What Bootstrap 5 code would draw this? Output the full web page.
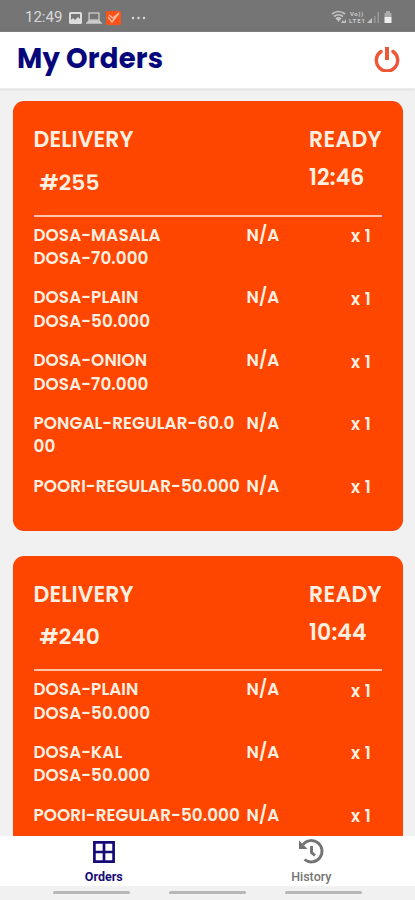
<!DOCTYPE html>
<html lang="en">
<head>
<meta charset="utf-8">
<meta name="viewport" content="width=device-width, initial-scale=1">
<title>My Orders</title>
<link href="https://cdn.jsdelivr.net/npm/bootstrap@5.3.0/dist/css/bootstrap.min.css" rel="stylesheet">
<style>
body{font-family:Poppins,Inter,sans-serif;background:#f1f1f1;height:900px}
svg{display:block;flex:none}
.status-bar{height:32px;background:#757575;color:#d8d8d8;font:15px/1 Roboto,sans-serif;padding:3px 22px 0 25px}
.clock{width:44px}
.app-header{height:57px;padding:0 15px 3px 17px;border-bottom:1px solid #eee;box-shadow:0 1px 2px #ddd;z-index:1}
.app-header h1{font-size:27.500px;font-weight:700;color:#07077c;letter-spacing:.2px;line-height:1}
.orders{padding:12px 12px 0 13px;min-height:0}
.order{background:#ff4600;color:#fff0e2;border-radius:11px;padding:25px 21px 0 20.5px;height:430px;margin-bottom:24.7px;flex:none}
.order-head{height:90.500px;border-bottom:2px solid #ffc4a7;font-size:22px;font-weight:600;line-height:28px}
.kind{letter-spacing:.12px}
.number{padding:14.500px 0 0 6px;font-size:21.8px}
.ready{width:73px}
.ready-label{letter-spacing:.3px;white-space:nowrap}
.time{padding-top:10px;letter-spacing:.1px}
.item{font-size:16.800px;font-weight:600;line-height:23.4px;margin-bottom:16px;letter-spacing:.08px;white-space:nowrap}
.items{padding-top:7px}
.item-name{width:213px}
.item-note{width:104.500px}
.item-qty{padding-top:1.400px;letter-spacing:.4px}
.tabs{height:50px;font:bold 12.5px/14px Roboto,sans-serif;z-index:1}
.tab-link{width:50%;padding-top:2px;color:#747474}
.tab-link.current{color:#160b79}
.system-nav{height:14px;gap:39px;padding-top:5px;background:#f1f1f1;z-index:1}
.system-nav i{width:77px;height:3px;background:#b7b7b7;border-radius:2px}
</style>
</head>
<body class="d-flex flex-column overflow-hidden">
<div class="status-bar d-flex align-items-center flex-shrink-0">
  <span class="clock">12:49</span>
  <svg width="13" height="12" viewBox="0 0 13 12"><rect width="13" height="12" rx="1.5" fill="#ddd"/><path d="M2 2h9v5L9 5 6 8 4 6 2 8z" fill="#757575"/></svg>
  <svg class="ms-1" width="16" height="12" viewBox="0 0 16 12" fill="none" stroke="#ccc" stroke-width="1.3"><rect x="3" y="1" width="10" height="7"/><path d="M1 11h14l-2-2H3z" fill="#ccc"/></svg>
  <svg class="ms-1" width="15" height="14" viewBox="0 0 15 14"><rect width="15" height="14" rx="1" fill="#f9531c"/><path d="M2 6l4 5 7-9M3 4l4 3 6-5" fill="none" stroke="#ffb59a" stroke-width="1.5"/></svg>
  <svg class="ms-2" width="17" height="4" fill="#ddd"><circle cx="4" cy="2" r="1.2"/><circle cx="9.500" cy="2" r="1.2"/><circle cx="15" cy="2" r="1.2"/></svg>
  <svg class="ms-auto" width="62" height="16" viewBox="0 0 62 16"><g fill="none" stroke="#c4c4c4" stroke-width="1.7"><path d="M1 4q6.500-5 13 0M3 6.500q4.500-3.500 9 0M5 9q2.500-2 5 0"/></g><path d="M7.500 12l-2-3h4zM10 13l2-3 1 2 2-3v4zM36 13h5V8z" fill="#c4c4c4"/><g fill="#ccc" font-family="Roboto" font-size="6" font-weight="700"><text x="19" y="6" textLength="13">Vo))</text><text x="18" y="13" textLength="16">LTE1</text></g><path d="M43 6h1.500v7H43zM46.500 2H48v11h-1.500z" fill="#999"/><path d="M55 1h4v2h1.500v4h-7V3H55z" fill="#aaa"/><path d="M53.500 7h7v6h-7z" fill="#eee"/></svg>
</div>
<header class="app-header bg-white d-flex align-items-center justify-content-between flex-shrink-0 position-relative">
  <h1 class="mb-0">My Orders</h1>
  <svg width="26" height="27" viewBox="0 0 26 27" fill="none" stroke="#ed5636" stroke-width="3.400" stroke-linecap="round"><path d="M7 6.500a10.700 10.700 0 1 0 12 0"/><path d="M13 2v13" stroke-width="4" stroke-linecap="butt"/></svg>
</header>
<main class="orders flex-grow-1 overflow-hidden d-flex flex-column">
  <section class="order">
    <div class="order-head d-flex justify-content-between">
      <div><div class="kind">DELIVERY</div><div class="number">#255</div></div>
      <div class="ready"><div class="ready-label">READY</div><div class="time">12:46</div></div>
    </div>
    <div class="items">
      <div class="item d-flex"><div class="item-name">DOSA-MASALA<br>DOSA-70.000</div><div class="item-note">N/A</div><div class="item-qty">x 1</div></div>
      <div class="item d-flex"><div class="item-name">DOSA-PLAIN<br>DOSA-50.000</div><div class="item-note">N/A</div><div class="item-qty">x 1</div></div>
      <div class="item d-flex"><div class="item-name">DOSA-ONION<br>DOSA-70.000</div><div class="item-note">N/A</div><div class="item-qty">x 1</div></div>
      <div class="item d-flex"><div class="item-name">PONGAL-REGULAR-60.0<br>00</div><div class="item-note">N/A</div><div class="item-qty">x 1</div></div>
      <div class="item d-flex"><div class="item-name">POORI-REGULAR-50.000</div><div class="item-note">N/A</div><div class="item-qty">x 1</div></div>
    </div>
  </section>
  <section class="order">
    <div class="order-head d-flex justify-content-between">
      <div><div class="kind">DELIVERY</div><div class="number">#240</div></div>
      <div class="ready"><div class="ready-label">READY</div><div class="time">10:44</div></div>
    </div>
    <div class="items">
      <div class="item d-flex"><div class="item-name">DOSA-PLAIN<br>DOSA-50.000</div><div class="item-note">N/A</div><div class="item-qty">x 1</div></div>
      <div class="item d-flex"><div class="item-name">DOSA-KAL<br>DOSA-50.000</div><div class="item-note">N/A</div><div class="item-qty">x 1</div></div>
      <div class="item d-flex"><div class="item-name">POORI-REGULAR-50.000</div><div class="item-note">N/A</div><div class="item-qty">x 1</div></div>
    </div>
  </section>
</main>
<nav class="tabs bg-white d-flex flex-shrink-0">
  <a class="tab-link current text-decoration-none d-flex flex-column align-items-center" href="#"><svg width="28" height="28" viewBox="0 0 28 28" fill="none" stroke="currentColor" stroke-width="2.700"><path d="M4.400 4.400h19.200v19.200H4.400zM14 4v20M4 14h20"/></svg><span class="mt-1">Orders</span></a>
  <a class="tab-link text-decoration-none d-flex flex-column align-items-center" href="#"><svg width="28" height="28" viewBox="0 0 28 28" fill="none" stroke="currentColor" stroke-width="2.900"><path d="M6 6.500A10.700 10.700 0 1 1 7.500 21.500"/><path d="M14.500 8v6.500l3.500 3"/><path d="M2 2.500v8.500h8.500z" fill="currentColor" stroke="none"/></svg><span class="mt-1 fw-medium">History</span></a>
</nav>
<div class="system-nav d-flex justify-content-center flex-shrink-0"><i></i><i></i><i></i></div>
<script src="https://cdn.jsdelivr.net/npm/bootstrap@5.3.0/dist/js/bootstrap.bundle.min.js"></script>
</body>
</html>
